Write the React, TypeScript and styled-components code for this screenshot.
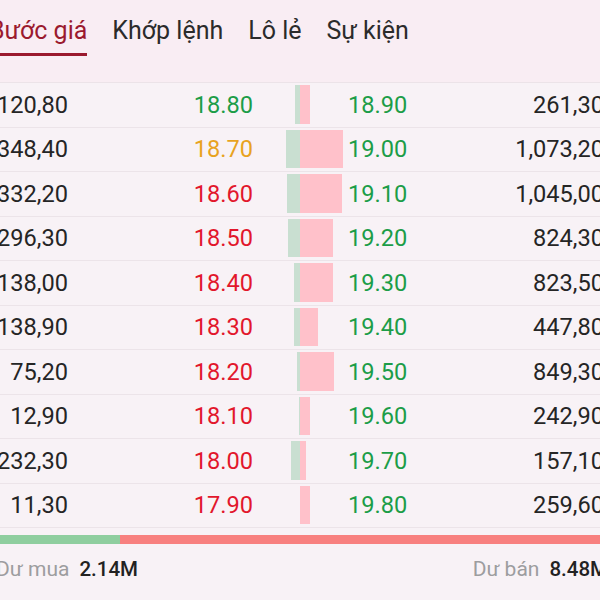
import React from "react";
import styled, { createGlobalStyle } from "styled-components";

const GlobalStyle = createGlobalStyle`
  html, body {
    margin: 0;
    padding: 0;
    background: #f8f2f6;
    font-family: Roboto, "Noto Sans", "Liberation Sans", sans-serif;
    overflow: hidden;
  }
`;

const Frame = styled.div`
  width: 600px;
  height: 600px;
  overflow: hidden;
  background: #f8f2f6;
  display: flex;
  flex-direction: column;
`;

const Header = styled.div`
  height: 83px;
  background: #f9edf3;
  border-bottom: 1px solid #ece3e8;
  box-sizing: border-box;
  flex-shrink: 0;
  overflow: hidden;
`;

const Tabs = styled.div`
  display: flex;
  gap: 25px;
  height: 56px;
  margin-left: -11px;
`;

const Tab = styled.div<{ $active?: boolean }>`
  display: flex;
  align-items: center;
  padding-top: 7px;
  box-sizing: border-box;
  height: 100%;
  font-size: 25px;
  color: ${(p) => (p.$active ? "#9b1a2e" : "#2b2b2b")};
  border-bottom: 3px solid ${(p) => (p.$active ? "#9b1a2e" : "transparent")};
  white-space: nowrap;
`;

const Table = styled.div`
  display: flex;
  flex-direction: column;
  flex-shrink: 0;
`;

const Row = styled.div`
  display: grid;
  grid-template-columns: 68px 185px 95px 100px 156px;
  height: 44.5px;
  border-bottom: 1px solid #ece4e9;
  box-sizing: border-box;
  font-size: 23.6px;
  color: #252525;
`;

const Cell = styled.div<{ $align?: "start" | "end"; $color?: string }>`
  display: flex;
  align-items: center;
  justify-content: ${(p) => (p.$align === "start" ? "flex-start" : "flex-end")};
  color: ${(p) => p.$color ?? "#252525"};
  white-space: nowrap;
`;

const BarCell = styled.div`
  display: grid;
  grid-template-columns: 1fr 1fr;
  padding: 2px 0 3px;
  margin-left: -1px;
`;

const BidBar = styled.div`
  justify-self: end;
  height: 100%;
  background: #c9dfd1;
`;

const AskBar = styled.div`
  justify-self: start;
  height: 100%;
  background: #ffc1ca;
`;

const Ratio = styled.div`
  display: flex;
  height: 9px;
  margin-top: 7px;
`;

const RatioPart = styled.div<{ $color: string }>`
  background: ${(p) => p.$color};
`;

const Footer = styled.div`
  display: flex;
  justify-content: space-between;
  align-items: center;
  height: 50px;
  margin: 0 -8px 0 -4px;
`;

const Summary = styled.div`
  display: flex;
  align-items: baseline;
  gap: 10px;
  white-space: nowrap;
`;

const Label = styled.span`
  color: #9d9d9f;
  font-size: 21px;
`;

const Value = styled.span`
  color: #222;
  font-size: 20.5px;
  font-weight: 500;
`;

const GREEN = "#1c9d48";
const RED = "#e2172c";
const YELLOW = "#e8a31f";

type Level = {
  bidVol: number;
  bid: string;
  bidColor: string;
  ask: string;
  askVol: number;
};

const levels: Level[] = [
  { bidVol: 120.8, bid: "18.80", bidColor: GREEN, ask: "18.90", askVol: 261.3 },
  { bidVol: 348.4, bid: "18.70", bidColor: YELLOW, ask: "19.00", askVol: 1073.2 },
  { bidVol: 332.2, bid: "18.60", bidColor: RED, ask: "19.10", askVol: 1045.0 },
  { bidVol: 296.3, bid: "18.50", bidColor: RED, ask: "19.20", askVol: 824.3 },
  { bidVol: 138.0, bid: "18.40", bidColor: RED, ask: "19.30", askVol: 823.5 },
  { bidVol: 138.9, bid: "18.30", bidColor: RED, ask: "19.40", askVol: 447.8 },
  { bidVol: 75.2, bid: "18.20", bidColor: RED, ask: "19.50", askVol: 849.3 },
  { bidVol: 12.9, bid: "18.10", bidColor: RED, ask: "19.60", askVol: 242.9 },
  { bidVol: 232.3, bid: "18.00", bidColor: RED, ask: "19.70", askVol: 157.1 },
  { bidVol: 11.3, bid: "17.90", bidColor: RED, ask: "19.80", askVol: 259.6 },
];

// 1,073,20 style: thousands with ",", two decimals with ","
const fmtVol = (v: number) => {
  const [int, dec] = v.toFixed(2).split(".");
  return int.replace(/\B(?=(\d{3})+(?!\d))/g, ",") + "," + dec;
};

const tabs = ["Bước giá", "Khớp lệnh", "Lô lẻ", "Sự kiện"];

const App = () => {
  return (
    <Frame>
      <GlobalStyle />
      <Header>
        <Tabs>
          {tabs.map((t, i) => (
            <Tab key={t} $active={i === 0}>
              {t}
            </Tab>
          ))}
        </Tabs>
      </Header>
      <Table>
        {levels.map((l) => (
          <Row key={l.bid}>
            <Cell>{fmtVol(l.bidVol)}</Cell>
            <Cell $color={l.bidColor}>{l.bid}</Cell>
            <BarCell>
              <BidBar style={{ width: l.bidVol / 25 }} />
              <AskBar style={{ width: l.askVol / 25 }} />
            </BarCell>
            <Cell $align="start" $color={GREEN}>
              {l.ask}
            </Cell>
            <Cell>{fmtVol(l.askVol)}</Cell>
          </Row>
        ))}
      </Table>
      <Ratio>
        <RatioPart $color="#8fce9f" style={{ width: 120 }} />
        <RatioPart $color="#f8807f" style={{ flex: 1 }} />
      </Ratio>
      <Footer>
        <Summary>
          <Label>Dư mua</Label>
          <Value>2.14M</Value>
        </Summary>
        <Summary>
          <Label>Dư bán</Label>
          <Value>8.48M</Value>
        </Summary>
      </Footer>
    </Frame>
  );
};

export default App;
